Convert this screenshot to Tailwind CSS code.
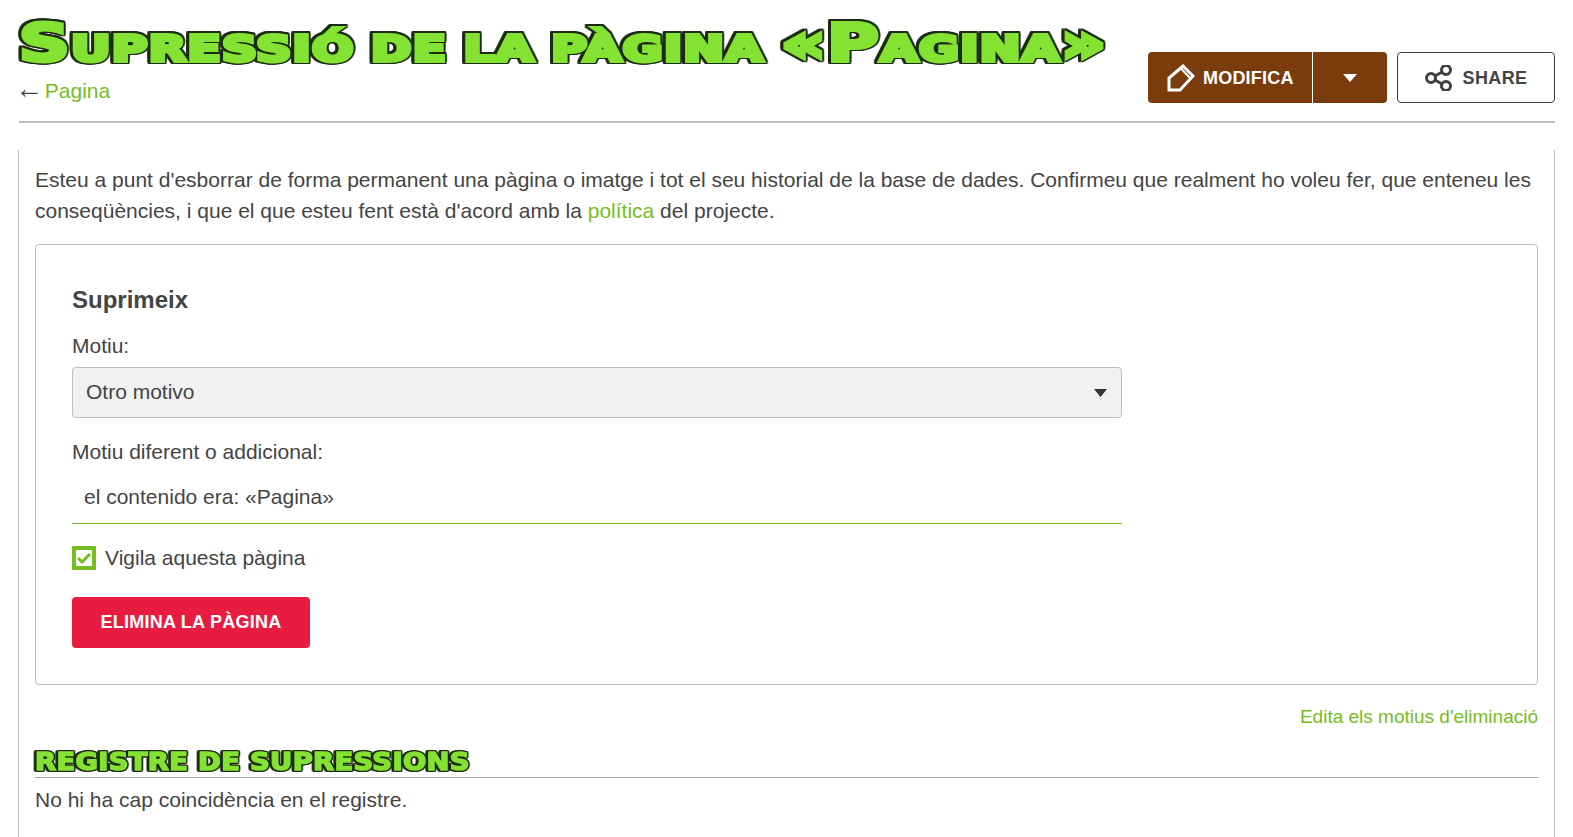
<!DOCTYPE html>
<html lang="ca">
<head>
<meta charset="utf-8">
<title>Supressió de la pàgina</title>
<script src="https://cdn.jsdelivr.net/npm/@tailwindcss/browser@4"></script>
</head>
<body class="bg-white h-[837px] overflow-hidden font-['Liberation_Sans',Arial,sans-serif] text-[#444444] text-[21px]">
<div class="ml-[19px] mr-[18px] h-[123px] border-b-2 border-[#bdbdbd] flex justify-between">
  <div class="min-w-0">
    <h1 class="inline-block origin-left scale-x-[1.35] pt-[11px] h-[72px] whitespace-nowrap font-['DejaVu_Sans',sans-serif] font-bold [font-variant:small-caps] text-[#84e232] text-[52px] leading-[64px] tracking-[1px] [word-spacing:-7px] [-webkit-text-stroke:4px_#84e232] [filter:drop-shadow(1.5px_0_0_#1c2a14)_drop-shadow(-1.5px_0_0_#1c2a14)_drop-shadow(0_1.5px_0_#1c2a14)_drop-shadow(0_-1.5px_0_#1c2a14)]">Supressió de la pàgina «Pagina»</h1>
    <div class="mt-[4px] text-[21px] leading-[30px]"><span class="text-[28px] leading-[0] ml-[-4px] mr-[-4px] font-['Liberation_Serif',serif]">←</span> <a class="text-[#76bd22]">Pagina</a></div>
  </div>
  <div class="flex gap-[10px] pt-[52px] shrink-0">
    <div class="flex h-[51px] w-[239px] rounded-[4px] bg-[#7a3c0c] text-white font-bold text-[18px] tracking-[0.2px]">
      <div class="w-[165px] flex items-center pl-[19px] gap-[8px] border-r border-white">
        <svg width="28" height="28" viewBox="0 0 28 28" fill="none" stroke="white" stroke-width="3"><path d="M2 26V14L16 2l10 10-13 14z"/><path d="M14.500 5L23 14" stroke-width="2"/></svg>
        <span class="pt-[1px]">MODIFICA</span>
      </div>
      <div class="flex-1 flex items-center justify-center"><svg width="14" height="8" viewBox="0 0 14 8" fill="white"><path d="M0 0h14L7 8z"/></svg></div>
    </div>
    <div class="flex items-center justify-center gap-[9px] h-[51px] w-[158px] rounded-[4px] border border-[#404040] font-bold text-[18px] tracking-[0.4px] pl-[1px]">
      <svg width="28" height="26" viewBox="0 0 28 26" fill="none" stroke="#404040" stroke-width="3"><circle cx="6" cy="13" r="4.500"/><circle cx="21" cy="5" r="4.500"/><circle cx="21" cy="21" r="4.500"/><path d="M10 11l7-4M10 15l7 4"/></svg>
      <span class="pt-[1px]">SHARE</span>
    </div>
  </div>
</div>
<div class="mt-[27px] ml-[18px] mr-[18px] h-[700px] border-x border-[#bdbdbd] px-[16px] pt-[14px]">
  <p class="leading-[31px]">Esteu a punt d'esborrar de forma permanent una pàgina o imatge i tot el seu historial de la base de dades. Confirmeu que realment ho voleu fer, que enteneu les conseqüències, i que el que esteu fent està d'acord amb la <a class="text-[#76bd22]">política</a> del projecte.</p>
  <div class="mt-[18px] h-[441px] border border-[#bdbdbd] rounded-[4px] px-[36px]">
    <h2 class="pt-[40px] text-[24px] leading-[30px] font-bold">Suprimeix</h2>
    <div class="mt-[16px] leading-[30px]">Motiu:</div>
    <div class="mt-[6px] w-[1050px] h-[51px] rounded-[4px] border border-[#bdbdbd] bg-[#f1f1f1] flex items-center justify-between pl-[13px] pr-[14px]">
      <span class="pb-[2px]">Otro motivo</span>
      <svg width="13" height="8" viewBox="0 0 13 8" fill="#333"><path d="M0 0h13L6.500 8z"/></svg>
    </div>
    <div class="mt-[19px] leading-[30px]">Motiu diferent o addicional:</div>
    <div class="mt-[3px] w-[1050px] h-[54px] border-b border-[#76bd22] pl-[12px] flex items-center">el contenido era: «Pagina»</div>
    <div class="mt-[22px] flex items-center gap-[9px] h-[24px]">
      <div class="w-[24px] h-[24px] border-[4px] border-[#76bd22] flex items-center justify-center">
        <svg width="14" height="11" viewBox="0 0 14 11" fill="none" stroke="#76bd22" stroke-width="3"><path d="M1 5l4 4L13 1"/></svg>
      </div>
      <span>Vigila aquesta pàgina</span>
    </div>
    <div class="mt-[27px] w-[238px] h-[51px] rounded-[4px] bg-[#e81c40] text-white font-bold text-[18px] tracking-[0.25px] flex items-center justify-center">ELIMINA LA PÀGINA</div>
  </div>
  <div class="mt-[17px] text-right text-[#76bd22] text-[19px] leading-[30px]">Edita els motius d'eliminació</div>
  <div class="mt-[10px] h-[36px] border-b border-[#a8a8a8]">
    <h2 class="inline-block origin-left scale-x-[1.14] whitespace-nowrap uppercase font-['DejaVu_Sans',sans-serif] font-bold text-[#84e232] text-[24px] leading-[40px] tracking-[0.3px] [-webkit-text-stroke:1.500px_#84e232] [filter:drop-shadow(1.2px_0_0_#1c2a14)_drop-shadow(-1.2px_0_0_#1c2a14)_drop-shadow(0_1.5px_0_#1c2a14)_drop-shadow(0_-1px_0_#1c2a14)]">Registre de supressions</h2>
  </div>
  <p class="leading-[30px] mt-[7px]">No hi ha cap coincidència en el registre.</p>
</div>
</body>
</html>
